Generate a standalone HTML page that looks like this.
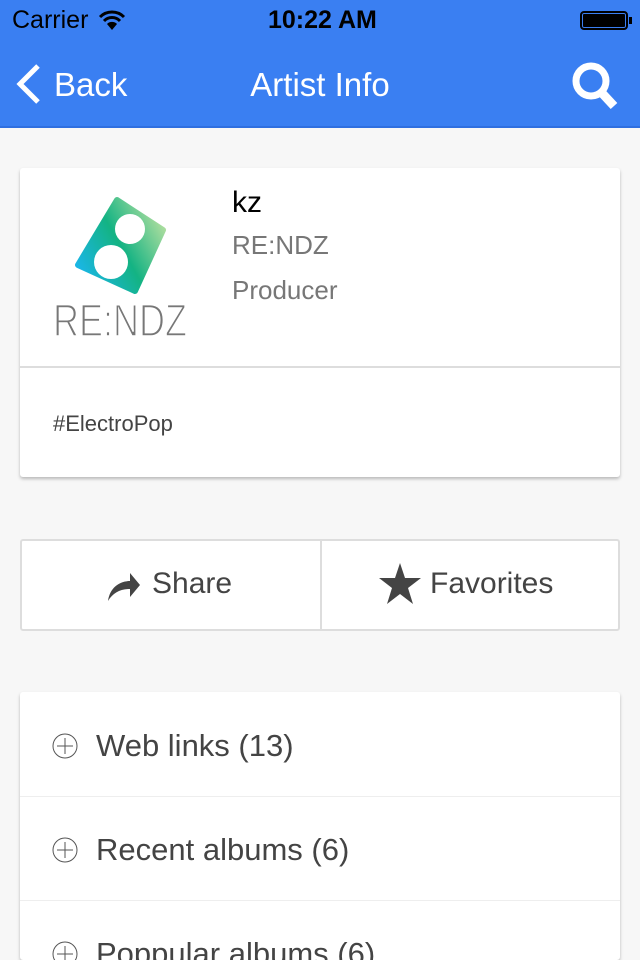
<!DOCTYPE html>
<html><head><meta charset="utf-8"><style>
*{margin:0;padding:0;box-sizing:border-box}
html{width:640px;height:960px;overflow:hidden}
body{width:640px;height:960px;overflow:hidden;background:#f7f7f7;font-family:"Liberation Sans",sans-serif;position:relative}
.nav{position:absolute;left:0;top:0;width:640px;height:128px;background:#3a7ff2;border-bottom:2px solid #2f6fe0}
.abs{position:absolute}
.card{position:absolute;background:#fff;box-shadow:0 2px 3px rgba(0,0,0,0.25);border-radius:3px}
</style></head><body>
<div class="nav">
  <div class="abs" style="left:12px;top:6px;font-size:25px;color:#000">Carrier</div>
  <svg class="abs" style="left:98px;top:10px" width="28" height="20" viewBox="0 0 28 20"><path d="M2 7 A17 17 0 0 1 26 7" stroke="#000" stroke-width="3" fill="none"/><path d="M6 11 A11 11 0 0 1 22 11" stroke="#000" stroke-width="3" fill="none"/><path d="M14 20 L9 14 A7 7 0 0 1 19 14 Z" fill="#000"/></svg>
  <div class="abs" style="left:268px;top:6px;font-size:25px;font-weight:bold;color:#000">10:22 AM</div>
  <div class="abs" style="left:580px;top:11px;width:48px;height:19px;border:2px solid #000;border-radius:4px;background:#000;box-shadow:inset 0 0 0 1px #3a7ff2"></div>
  <div class="abs" style="left:629px;top:17px;width:3px;height:7px;background:#000"></div>
  <svg class="abs" style="left:14px;top:64px" width="28" height="40" viewBox="0 0 28 40"><path d="M24 2 L6 20 L24 38" stroke="#fff" stroke-width="5" fill="none"/></svg>
  <div class="abs" style="left:54px;top:66px;font-size:33px;color:#fff">Back</div>
  <div class="abs" style="left:0;width:640px;top:66px;font-size:33px;color:#fff;text-align:center">Artist Info</div>
  <svg class="abs" style="left:570px;top:60px" width="52" height="50" viewBox="0 0 52 50"><circle cx="21" cy="21" r="15" stroke="#fff" stroke-width="7" fill="none"/><path d="M31 32 L44 46" stroke="#fff" stroke-width="9"/></svg>
</div>

<div class="card" style="left:20px;top:168px;width:600px;height:309px">
  <svg class="abs" style="left:0;top:0" width="200" height="200" viewBox="0 0 200 200">
    <defs><linearGradient id="g" x1="0" y1="0.8" x2="1" y2="0.2"><stop offset="0" stop-color="#1ab6ea"/><stop offset="0.5" stop-color="#14b383"/><stop offset="1" stop-color="#b4e0a0"/></linearGradient></defs>
    <path d="M97 32 L143 62 L115 123 L58 97 Z" fill="url(#g)" stroke="url(#g)" stroke-width="6" stroke-linejoin="round"/>
    <circle cx="110" cy="61" r="15" fill="#fff"/>
    <circle cx="91" cy="94" r="17" fill="#fff"/>
    <text x="33" y="168" font-family="Liberation Sans,sans-serif" font-size="45" fill="#777" stroke="#fff" stroke-width="1.6" textLength="134" lengthAdjust="spacingAndGlyphs">RE:NDZ</text>
  </svg>
  <div class="abs" style="left:212px;top:18px;font-size:30px;color:#000">kz</div>
  <div class="abs" style="left:212px;top:62px;font-size:26px;color:#777">RE:NDZ</div>
  <div class="abs" style="left:212px;top:107px;font-size:26px;color:#777">Producer</div>
  <div class="abs" style="left:0;top:198px;width:600px;height:2px;background:#ddd"></div>
  <div class="abs" style="left:33px;top:243px;font-size:22px;color:#444">#ElectroPop</div>
</div>

<div class="abs" style="left:20px;top:539px;width:600px;height:92px;border:2px solid #ddd;border-radius:3px;background:#fff">
  <div class="abs" style="left:298px;top:0;width:2px;height:88px;background:#ddd"></div>
  <svg class="abs" style="left:86px;top:28px" width="34" height="32" viewBox="0 0 34 32"><path d="M0 32 C2 18 12 12 22 12 L22 4 L32 16 L22 28 L22 20 C12 20 5 24 0 32 Z" fill="#444"/></svg>
  <div class="abs" style="left:130px;top:26px;font-size:30px;color:#444">Share</div>
  <svg class="abs" style="left:356px;top:22px" width="44" height="42" viewBox="0 0 44 42"><path d="M22 0 L27 15 L43 15 L30 25 L35 41 L22 31 L9 41 L14 25 L1 15 L17 15 Z" fill="#444"/></svg>
  <div class="abs" style="left:408px;top:26px;font-size:30px;color:#444">Favorites</div>
</div>

<div class="card" style="left:20px;top:692px;width:600px;height:268px">
  <div class="abs" style="left:0;top:104px;width:600px;height:1px;background:#eee"></div>
  <div class="abs" style="left:0;top:208px;width:600px;height:1px;background:#eee"></div>
</div>
<svg class="abs" style="left:51px;top:732px" width="28" height="28" viewBox="0 0 28 28"><circle cx="14" cy="14" r="12" stroke="#555" stroke-width="1" fill="none"/><path d="M14 6V22M6 14H22" stroke="#555" stroke-width="1"/></svg>
<div class="abs" style="left:96px;top:728px;font-size:31px;color:#444">Web links (13)</div>
<svg class="abs" style="left:51px;top:836px" width="28" height="28" viewBox="0 0 28 28"><circle cx="14" cy="14" r="12" stroke="#555" stroke-width="1" fill="none"/><path d="M14 6V22M6 14H22" stroke="#555" stroke-width="1"/></svg>
<div class="abs" style="left:96px;top:832px;font-size:31px;color:#444">Recent albums (6)</div>
<svg class="abs" style="left:51px;top:940px" width="28" height="28" viewBox="0 0 28 28"><circle cx="14" cy="14" r="12" stroke="#555" stroke-width="1" fill="none"/><path d="M14 6V22M6 14H22" stroke="#555" stroke-width="1"/></svg>
<div class="abs" style="left:96px;top:936px;font-size:31px;color:#444">Poppular albums (6)</div>
</body></html>
